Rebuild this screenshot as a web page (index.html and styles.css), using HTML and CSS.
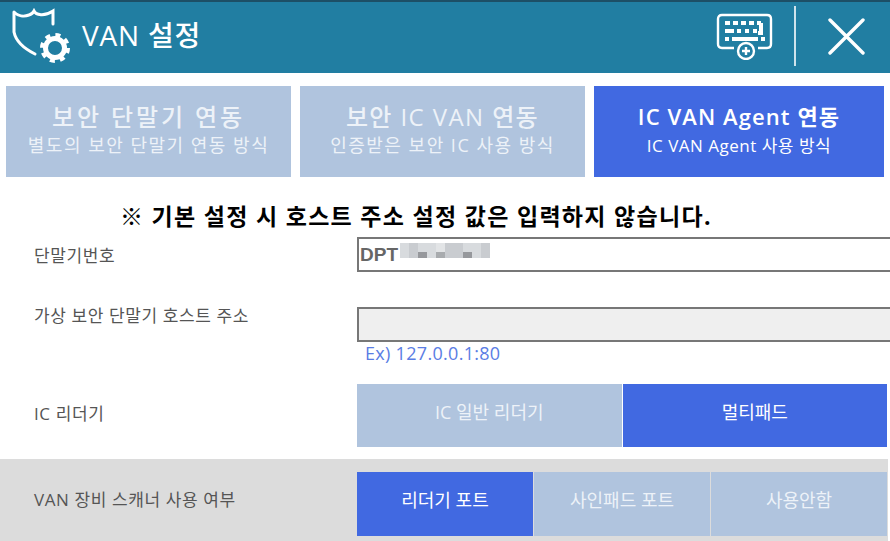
FILE: index.html
```html
<!DOCTYPE html>
<html lang="ko">
<head>
	<meta charset="UTF-8">
	<title>VAN 설정</title>
	<link rel="stylesheet" href="styles.css">
</head>
<body>
	<div class="header">
		<svg class="logo" width="72" height="64" viewBox="0 0 72 64">
			<path d="M14 12 C18 16 24 17 29 15 C31 14.5 33 13 34 11 C36 15 44 17 53 11 L53 24 M14 12 L14 32 C16 42 25 49 35 54" fill="none" stroke="#fff" stroke-width="3" stroke-linecap="round"/>
			<circle cx="55" cy="48" r="9.5" fill="none" stroke="#fff" stroke-width="5"/>
			<circle cx="55" cy="48" r="13" fill="none" stroke="#fff" stroke-width="4" stroke-dasharray="5 5.21"/>
		</svg>
		<div class="title">VAN 설정</div>
		<svg class="keyboard" width="60" height="48" viewBox="0 0 60 48">
			<path d="M19 36 H7 Q3 36 3 32 V7 Q3 3 7 3 H52 Q56 3 56 7 V32 Q56 36 52 36 H43" fill="none" stroke="#fff" stroke-width="2.4"/>
			<path d="M10 11 h5 M18 11 h5 M26 11 h5 M34 11 h5 M42 11 h4 M10 19 h9 M22 19 h4 M30 19 h4 M38 19 h4 M46 11 v10 h-3 M10 27 h4 M17 27 h26 M46 27 h4" fill="none" stroke="#fff" stroke-width="4"/>
			<circle cx="31" cy="39" r="8" fill="#217ea2" stroke="#fff" stroke-width="2.4"/>
			<path d="M27 39 h8 M31 35 v8" stroke="#fff" stroke-width="2.4"/>
		</svg>
		<div class="divider"></div>
		<svg class="close" width="37" height="37" viewBox="0 0 37 37">
			<path d="M2 2 L35 35 M35 2 L2 35" stroke="#fff" stroke-width="3.4" stroke-linecap="round"/>
		</svg>
	</div>

	<div class="tabs">
		<div class="tab">
			<div class="tab-title wide">보안 단말기 연동</div>
			<div class="tab-sub">별도의 보안 단말기 연동 방식</div>
		</div>
		<div class="tab">
			<div class="tab-title">보안 IC VAN 연동</div>
			<div class="tab-sub">인증받은 보안 IC 사용 방식</div>
		</div>
		<div class="tab active">
			<div class="tab-title">IC VAN Agent 연동</div>
			<div class="tab-sub">IC VAN Agent 사용 방식</div>
		</div>
	</div>

	<div class="notice">※ 기본 설정 시 호스트 주소 설정 값은 입력하지 않습니다.</div>

	<div class="row row-terminal">
		<div class="label">단말기번호</div>
		<div class="field">
			<div class="input">
				<span class="input-text">DPT</span>
				<span class="blur">
					<i class="b1"></i><i class="b2"></i><i class="b3"></i><i class="b1"></i><i class="b4"></i><i class="b2"></i><i class="b2"></i><i class="b3"></i><i class="b1"></i><i class="b2"></i>
				</span>
			</div>
		</div>
	</div>

	<div class="row row-host">
		<div class="label">가상 보안 단말기 호스트 주소</div>
		<div class="field">
			<div class="input disabled"></div>
			<div class="hint">Ex) 127.0.0.1:80</div>
		</div>
	</div>

	<div class="row row-reader">
		<div class="label">IC 리더기</div>
		<div class="buttons">
			<div class="btn">IC 일반 리더기</div>
			<div class="btn active">멀티패드</div>
		</div>
	</div>

	<div class="row row-scanner">
		<div class="label">VAN 장비 스캐너 사용 여부</div>
		<div class="buttons">
			<div class="btn active">리더기 포트</div>
			<div class="btn">사인패드 포트</div>
			<div class="btn">사용안함</div>
		</div>
	</div>
</body>
</html>
```

FILE: styles.css
```css
* {
	padding: 0;
	margin: 0;
	box-sizing: border-box;
}
html, body {
	height: 541px;
	overflow: hidden;
}
body {
	width: 890px;
	background-color: #fff;
	font-family: "Open Sans", "Noto Sans CJK KR", sans-serif;
	color: #555;
}
.header {
	display: flex;
	align-items: center;
	height: 73px;
	padding-bottom: 3px;
	border-top: 2px solid #1d4f66;
	background-color: #217ea2;
	color: #fff;
}
.logo {
	margin-top: -8px;
}
.title {
	margin: -4px 0 0 10px;
	font-size: 28px;
	font-weight: 500;
	letter-spacing: 0.8px;
}
.keyboard {
	margin-left: auto;
}
.divider {
	width: 2px;
	height: 60px;
	margin: 0 32px 0 19px;
	background-color: #cfe3ec;
}
.close {
	margin-right: 25px;
}
.tabs {
	display: flex;
	gap: 9px;
	padding: 13px 6px 0;
}
.tab {
	width: 285px;
	height: 91px;
	padding-top: 14px;
	background-color: #b0c4de;
	color: #edf2f8;
	text-align: center;
}
.tab.active {
	width: 290px;
	background-color: #4169e1;
	color: #fff;
}
.tab-title {
	font-size: 24px;
	line-height: 33px;
	font-weight: 500;
	letter-spacing: 1.4px;
}
.tab-title.wide {
	letter-spacing: 2.9px;
}
.tab.active .tab-title {
	font-size: 22px;
	font-weight: 600;
	letter-spacing: 1.1px;
}
.tab-sub {
	font-size: 18px;
	line-height: 25px;
	letter-spacing: 1.5px;
}
.tab.active .tab-sub {
	font-size: 17px;
	letter-spacing: 0.5px;
}
.notice {
	height: 30px;
	margin-top: 24px;
	padding-left: 120px;
	font-size: 23px;
	line-height: 30px;
	font-weight: 700;
	letter-spacing: 1.3px;
	color: #000;
}
.row {
	display: flex;
	padding-left: 34px;
}
.label {
	width: 323px;
	flex-shrink: 0;
	padding-top: 1px;
	font-size: 17px;
	letter-spacing: 0.6px;
}
.row-terminal {
	margin-top: 6px;
	height: 70px;
}
.row-terminal .label {
	line-height: 36px;
}
.row-host {
	height: 77px;
}
.row-host .label {
	line-height: 16px;
}
.field {
	flex: 1;
}
.input {
	display: flex;
	align-items: center;
	height: 35px;
	padding-left: 1px;
	border: 2px solid #777;
	border-right: 0;
	background-color: #fff;
}
.input.disabled {
	background-color: #efefef;
}
.input-text {
	font-family: "Liberation Sans", sans-serif;
	font-size: 19px;
	font-weight: 700;
	color: #666;
}
.blur {
	display: flex;
	height: 15px;
	margin: -9px 0 0 2px;
}
.blur i {
	display: block;
	width: 9px;
}
.b1 {
	background-color: #d8dbde;
}
.b2 {
	background-color: #c9ccd0;
}
.b3 {
	background: linear-gradient(#d8dbde 60%, #96989c 60%);
}
.b4 {
	background: linear-gradient(#e2e4e6 60%, #a8abae 60%);
}
.hint {
	margin-top: 1px;
	padding-left: 8px;
	font-size: 18px;
	line-height: 20px;
	letter-spacing: 0.3px;
	color: #5a7de4;
}
.row-reader {
	height: 75px;
	padding-right: 3px;
}
.row-reader .label {
	line-height: 58px;
}
.buttons {
	display: flex;
	flex: 1;
	gap: 1px;
	height: 63px;
}
.btn {
	flex: 1;
	background-color: #b0c4de;
	color: #edf2f8;
	font-size: 18px;
	line-height: 56px;
	text-align: center;
}
.btn.active {
	background-color: #4169e1;
	color: #fff;
}
.row-scanner {
	width: 888px;
	height: 82px;
	padding-top: 13px;
	padding-right: 1px;
	background-color: #dcdcdc;
}
.row-scanner .label {
	line-height: 54px;
}
.row-scanner .buttons {
	height: 64px;
}
```
